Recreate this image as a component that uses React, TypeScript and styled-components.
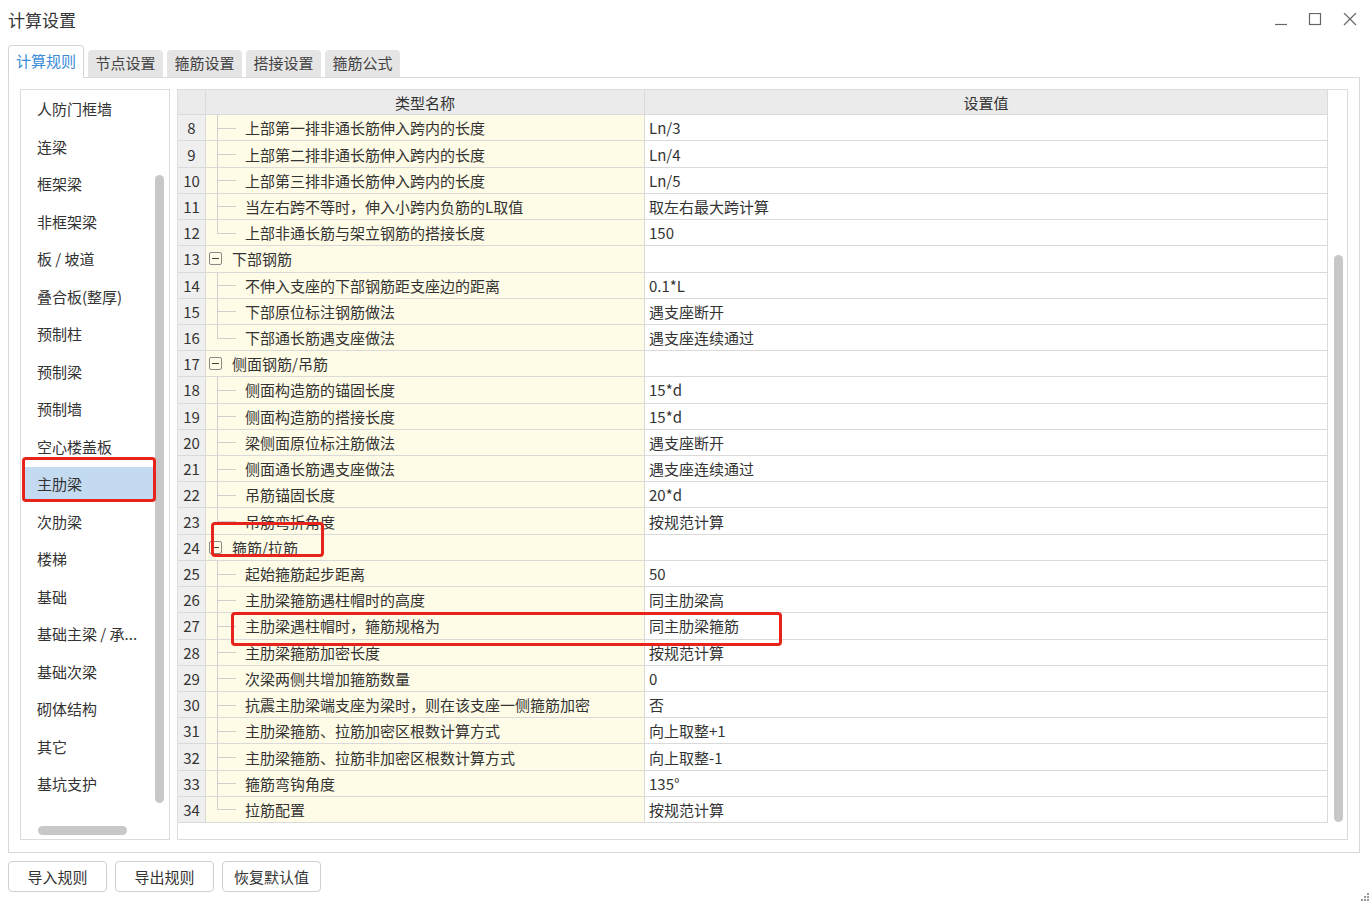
import React from 'react';
import styled, { createGlobalStyle } from 'styled-components';

const GlobalStyle = createGlobalStyle`
	html, body {
		margin: 0;
		padding: 0;
		background: #ffffff;
	}
	body {
		font-family: "Noto Sans CJK SC", "Noto Sans", sans-serif;
		color: #333333;
	}
`;

type RowKind = 'child' | 'last' | 'group';

interface RuleRow {
	no: number;
	kind: RowKind;
	name: string;
	value: string;
}

const sideItems = [
	'人防门框墙', '连梁', '框架梁', '非框架梁', '板 / 坡道', '叠合板(整厚)', '预制柱', '预制梁', '预制墙',
	'空心楼盖板', '主肋梁', '次肋梁', '楼梯', '基础', '基础主梁 / 承...', '基础次梁', '砌体结构', '其它', '基坑支护'
];

const rows: RuleRow[] = [
	{ no: 8, kind: 'child', name: '上部第一排非通长筋伸入跨内的长度', value: 'Ln/3' },
	{ no: 9, kind: 'child', name: '上部第二排非通长筋伸入跨内的长度', value: 'Ln/4' },
	{ no: 10, kind: 'child', name: '上部第三排非通长筋伸入跨内的长度', value: 'Ln/5' },
	{ no: 11, kind: 'child', name: '当左右跨不等时，伸入小跨内负筋的L取值', value: '取左右最大跨计算' },
	{ no: 12, kind: 'last', name: '上部非通长筋与架立钢筋的搭接长度', value: '150' },
	{ no: 13, kind: 'group', name: '下部钢筋', value: '' },
	{ no: 14, kind: 'child', name: '不伸入支座的下部钢筋距支座边的距离', value: '0.1*L' },
	{ no: 15, kind: 'child', name: '下部原位标注钢筋做法', value: '遇支座断开' },
	{ no: 16, kind: 'last', name: '下部通长筋遇支座做法', value: '遇支座连续通过' },
	{ no: 17, kind: 'group', name: '侧面钢筋/吊筋', value: '' },
	{ no: 18, kind: 'child', name: '侧面构造筋的锚固长度', value: '15*d' },
	{ no: 19, kind: 'child', name: '侧面构造筋的搭接长度', value: '15*d' },
	{ no: 20, kind: 'child', name: '梁侧面原位标注筋做法', value: '遇支座断开' },
	{ no: 21, kind: 'child', name: '侧面通长筋遇支座做法', value: '遇支座连续通过' },
	{ no: 22, kind: 'child', name: '吊筋锚固长度', value: '20*d' },
	{ no: 23, kind: 'last', name: '吊筋弯折角度', value: '按规范计算' },
	{ no: 24, kind: 'group', name: '箍筋/拉筋', value: '' },
	{ no: 25, kind: 'child', name: '起始箍筋起步距离', value: '50' },
	{ no: 26, kind: 'child', name: '主肋梁箍筋遇柱帽时的高度', value: '同主肋梁高' },
	{ no: 27, kind: 'child', name: '主肋梁遇柱帽时，箍筋规格为', value: '同主肋梁箍筋' },
	{ no: 28, kind: 'child', name: '主肋梁箍筋加密长度', value: '按规范计算' },
	{ no: 29, kind: 'child', name: '次梁两侧共增加箍筋数量', value: '0' },
	{ no: 30, kind: 'child', name: '抗震主肋梁端支座为梁时，则在该支座一侧箍筋加密', value: '否' },
	{ no: 31, kind: 'child', name: '主肋梁箍筋、拉筋加密区根数计算方式', value: '向上取整+1' },
	{ no: 32, kind: 'child', name: '主肋梁箍筋、拉筋非加密区根数计算方式', value: '向上取整-1' },
	{ no: 33, kind: 'child', name: '箍筋弯钩角度', value: '135°' },
	{ no: 34, kind: 'last', name: '拉筋配置', value: '按规范计算' },
];

const tabs = ['计算规则', '节点设置', '箍筋设置', '搭接设置', '箍筋公式'];

const Window = styled.div`
	position: relative;
	width: 1371px;
	height: 903px;
	overflow: hidden;
	font-size: 15px;
`;

const TitleBar = styled.div`
	height: 40px;
	display: flex;
	align-items: center;
	justify-content: space-between;
	padding: 0 4px 0 8px;
`;

const Title = styled.div`
	font-size: 17px;
	color: #333;
	margin-top: -1px;
`;

const Controls = styled.div`
	display: flex;
	align-items: center;
`;

const CtrlButton = styled.div`
	width: 34.5px;
	height: 30px;
	display: flex;
	align-items: center;
	justify-content: center;
`;

const TabBar = styled.div`
	display: flex;
	align-items: flex-end;
	gap: 4px;
	height: 32px;
	margin-top: 5px;
	padding-left: 8px;
`;

const Tab = styled.div<{ $active?: boolean }>`
	box-sizing: border-box;
	width: ${p => (p.$active ? 76 : 75)}px;
	height: ${p => (p.$active ? 33 : 27)}px;
	display: flex;
	align-items: center;
	justify-content: center;
	padding-bottom: 3px;
	background: ${p => (p.$active ? '#ffffff' : '#e5e5e5')};
	color: ${p => (p.$active ? '#3b8bd9' : '#444')};
	border: 1px solid ${p => (p.$active ? '#d5d5d5' : '#e5e5e5')};
	border-bottom: none;
	border-radius: 4px 4px 0 0;
	position: relative;
	z-index: ${p => (p.$active ? 2 : 1)};
	margin-bottom: ${p => (p.$active ? -1 : 0)}px;
`;

const Panel = styled.div`
	box-sizing: border-box;
	width: 1352px;
	height: 776px;
	margin-left: 8px;
	border: 1px solid #d9d9d9;
	padding: 11px;
	display: flex;
	gap: 7px;
`;

const SideList = styled.div`
	position: relative;
	box-sizing: border-box;
	width: 150px;
	height: 751px;
	border: 1px solid #dcdcdc;
	overflow: hidden;
`;

const SideRow = styled.div`
	box-sizing: border-box;
	height: 37.5px;
	padding: 2px 0 2px 3px;
`;

const SideLabel = styled.div<{ $selected?: boolean }>`
	box-sizing: border-box;
	height: 100%;
	width: 129px;
	padding-left: 13px;
	display: flex;
	align-items: center;
	white-space: nowrap;
	background: ${p => (p.$selected ? '#c4daf0' : 'transparent')};
	color: #333;
`;

const VScroll = styled.div`
	position: absolute;
	left: 134px;
	top: 85px;
	width: 9px;
	height: 628px;
	border-radius: 5px;
	background: #c8c8c8;
`;

const HScroll = styled.div`
	position: absolute;
	left: 17px;
	top: 736px;
	width: 89px;
	height: 9px;
	border-radius: 5px;
	background: #c8c8c8;
`;

const Grid = styled.div`
	box-sizing: border-box;
	width: 1171px;
	height: 751px;
	border: 1px solid #dcdcdc;
	display: flex;
`;

const Table = styled.div`
	width: 1150px;
	display: flex;
	flex-direction: column;
`;

const Row = styled.div<{ $header?: boolean }>`
	display: flex;
	height: ${p => (p.$header ? 25.2 : 26.22)}px;
	flex-shrink: 0;
`;

const Cell = styled.div<{ $w: number; $bg: string; $center?: boolean }>`
	box-sizing: border-box;
	width: ${p => p.$w}px;
	flex-shrink: 0;
	height: 100%;
	background: ${p => p.$bg};
	border-right: 1px solid #dadada;
	border-bottom: 1px solid #dadada;
	display: flex;
	align-items: center;
	justify-content: ${p => (p.$center ? 'center' : 'flex-start')};
	white-space: nowrap;
	overflow: hidden;
	position: relative;
	color: #333;
`;

const ValueText = styled.span`
	padding-left: 4px;
`;

const Gutter = styled.span<{ $last?: boolean }>`
	position: relative;
	width: 39px;
	height: 100%;
	flex-shrink: 0;
	&::before {
		content: '';
		position: absolute;
		left: 11px;
		top: 0;
		height: ${p => (p.$last ? '50%' : '100%')};
		border-left: 1px solid #cfcfcf;
	}
	&::after {
		content: '';
		position: absolute;
		left: 11px;
		top: 50%;
		width: 19px;
		border-top: 1px solid #cfcfcf;
	}
`;

const GroupGutter = styled.span`
	width: 26px;
	height: 100%;
	flex-shrink: 0;
	display: flex;
	align-items: center;
	padding-left: 3px;
	box-sizing: border-box;
`;

const Toggle = styled.span`
	box-sizing: border-box;
	width: 13px;
	height: 13px;
	border: 1px solid #8a8a8a;
	border-radius: 2px;
	display: flex;
	align-items: center;
	justify-content: center;
	&::after {
		content: '';
		width: 7px;
		border-top: 1px solid #444;
	}
`;

const ScrollTrack = styled.div`
	width: 19px;
	display: flex;
	justify-content: center;
	padding-left: 1px;
	box-sizing: border-box;
`;

const ScrollThumb = styled.div`
	margin-top: 165px;
	width: 9px;
	height: 567px;
	border-radius: 5px;
	background: #c8c8c8;
`;

const ButtonBar = styled.div`
	display: flex;
	gap: 8px;
	padding-left: 8px;
	margin-top: 8px;
`;

const Button = styled.div`
	box-sizing: border-box;
	width: 99px;
	height: 31px;
	border: 1px solid #d0d0d0;
	border-radius: 4px;
	display: flex;
	align-items: center;
	justify-content: center;
	color: #333;
	background: #fff;
`;

const Mark = styled.div`
	position: absolute;
	box-sizing: border-box;
	border: 3px solid #e8231b;
	border-radius: 4px;
	pointer-events: none;
`;

const Grip = styled.svg`
	position: absolute;
	right: 2px;
	bottom: 2px;
`;

const NAME_BG = '#fefbe6';
const NUM_BG = '#efefef';

const RuleRowView = ({ row }: { row: RuleRow }) => (
	<Row>
		<Cell $w={28} $bg={NUM_BG} $center>{row.no}</Cell>
		<Cell $w={439} $bg={NAME_BG}>
			{row.kind === 'group'
				? <GroupGutter><Toggle /></GroupGutter>
				: <Gutter $last={row.kind === 'last'} />}
			<span>{row.name}</span>
		</Cell>
		<Cell $w={683} $bg='#ffffff'><ValueText>{row.value}</ValueText></Cell>
	</Row>
);

const App = () => (
	<Window>
		<GlobalStyle />
		<TitleBar>
			<Title>计算设置</Title>
			<Controls>
				<CtrlButton>
					<svg width='14' height='14' viewBox='0 0 14 14'><line x1='1' y1='11.5' x2='13' y2='11.5' stroke='#666' strokeWidth='1.2' /></svg>
				</CtrlButton>
				<CtrlButton>
					<svg width='14' height='14' viewBox='0 0 14 14'><rect x='1.5' y='0.5' width='11' height='11' fill='none' stroke='#666' strokeWidth='1.2' /></svg>
				</CtrlButton>
				<CtrlButton>
					<svg width='14' height='14' viewBox='0 0 14 14'><path d='M1 0 L13 12 M13 0 L1 12' stroke='#666' strokeWidth='1.2' /></svg>
				</CtrlButton>
			</Controls>
		</TitleBar>

		<TabBar>
			{tabs.map((t, i) => <Tab key={t} $active={i === 0}>{t}</Tab>)}
		</TabBar>

		<Panel>
			<SideList>
				{sideItems.map(item => (
					<SideRow key={item}>
						<SideLabel $selected={item === '主肋梁'}>{item}</SideLabel>
					</SideRow>
				))}
				<VScroll />
				<HScroll />
			</SideList>

			<Grid>
				<Table>
					<Row $header>
						<Cell $w={28} $bg='#ebebeb' />
						<Cell $w={439} $bg='#ebebeb' $center>类型名称</Cell>
						<Cell $w={683} $bg='#ebebeb' $center>设置值</Cell>
					</Row>
					{rows.map(r => <RuleRowView key={r.no} row={r} />)}
				</Table>
				<ScrollTrack>
					<ScrollThumb />
				</ScrollTrack>
			</Grid>
		</Panel>

		<ButtonBar>
			<Button>导入规则</Button>
			<Button>导出规则</Button>
			<Button>恢复默认值</Button>
		</ButtonBar>

		{/* annotation boxes */}
		<Mark style={{ left: 22, top: 457, width: 134, height: 45 }} />
		<Mark style={{ left: 211, top: 522, width: 113, height: 35 }} />
		<Mark style={{ left: 231, top: 612, width: 551, height: 34 }} />

		<Grip width='9' height='9' viewBox='0 0 9 9'>
			{[[7, 1], [7, 4], [4, 4], [7, 7], [4, 7], [1, 7]].map(([x, y]) => (
				<rect key={`${x}-${y}`} x={x} y={y} width='2' height='2' fill='#999' />
			))}
		</Grip>
	</Window>
);

export default App;
